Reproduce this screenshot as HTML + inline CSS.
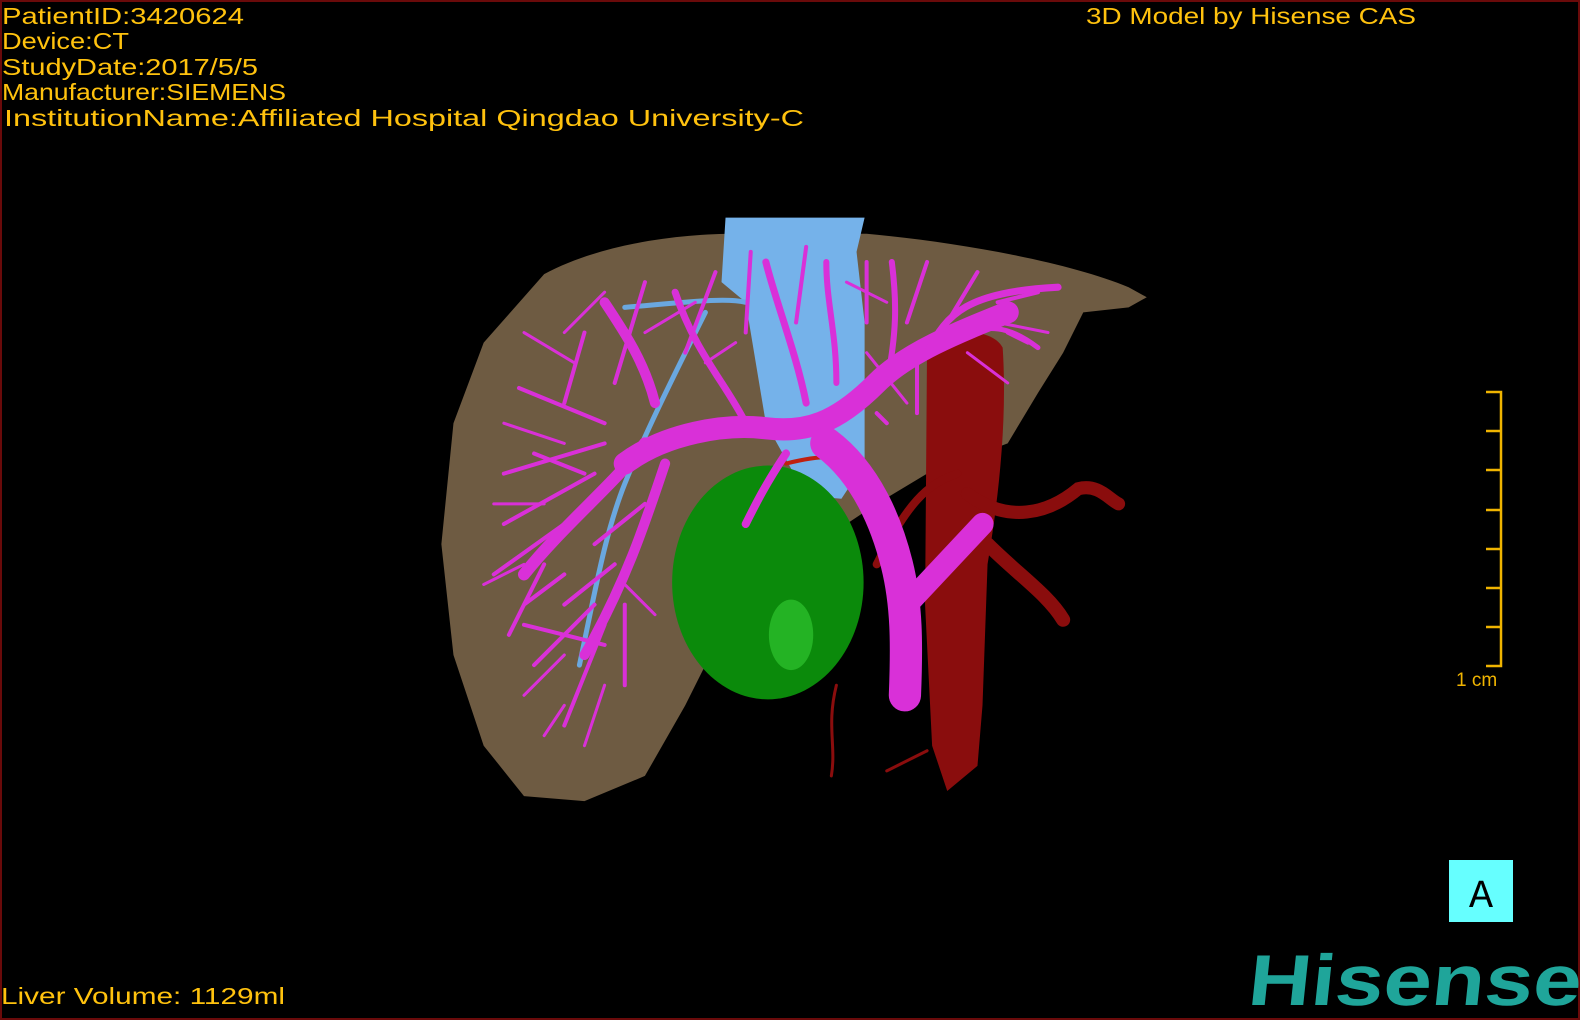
<!DOCTYPE html>
<html><head><meta charset="utf-8"><style>
html,body{margin:0;padding:0;background:#000;}
svg{display:block;}
.t{font-family:"Liberation Sans Narrow","Liberation Sans",sans-serif;fill:#ffc20e;font-size:23px;}
</style></head><body>
<svg width="1580" height="1020" viewBox="0 0 1580 1020" xmlns="http://www.w3.org/2000/svg">
<rect x="0" y="0" width="1580" height="1020" fill="#000"/>
<rect x="1" y="1" width="1578" height="1018" fill="none" stroke="#6a0a0a" stroke-width="2"/>
<text class="t" x="2" y="24" textLength="242" lengthAdjust="spacingAndGlyphs">PatientID:3420624</text>
<text class="t" x="2" y="49" textLength="127" lengthAdjust="spacingAndGlyphs">Device:CT</text>
<text class="t" x="2" y="75" textLength="256" lengthAdjust="spacingAndGlyphs">StudyDate:2017/5/5</text>
<text class="t" x="2" y="100" textLength="284" lengthAdjust="spacingAndGlyphs">Manufacturer:SIEMENS</text>
<text class="t" x="4" y="126" textLength="800" lengthAdjust="spacingAndGlyphs">InstitutionName:Affiliated Hospital Qingdao University-C</text>
<text class="t" x="1086" y="24" textLength="330" lengthAdjust="spacingAndGlyphs">3D Model by Hisense CAS</text>
<text class="t" x="1" y="1004" textLength="284" lengthAdjust="spacingAndGlyphs">Liver Volume: 1129ml</text>
<g fill="none" stroke="#f0b400" stroke-width="2.5">
<path d="M1486 392H1501V666H1486"/>
<path d="M1486 431H1501M1486 470H1501M1486 510H1501M1486 549H1501M1486 588H1501M1486 627H1501"/>
</g>
<text x="1456" y="686" font-family="Liberation Sans,sans-serif" font-size="19" fill="#f0b400">1 cm</text>
<rect x="1449" y="860" width="64" height="62" fill="#66ffff"/>
<text x="1481" y="907" text-anchor="middle" font-family="Liberation Mono,monospace" font-size="40" fill="#000">A</text>
<text x="1247" y="1005" font-family="Liberation Sans,sans-serif" font-weight="bold" font-size="72" fill="#1fa59a" textLength="333" lengthAdjust="spacingAndGlyphs" transform="skewX(-6) translate(105,0)">Hisense</text>
<g transform="scale(1.0077)">
<path d="M540 272 C600 240 680 232 730 232 L860 232 C950 240 1060 260 1120 285 L1138 295 L1120 305 L1075 310 L1055 350 L1030 390 L1000 440 L920 470 L870 500 L780 560 L720 620 L680 700 L640 770 L580 795 L520 790 L480 740 L450 650 L438 540 L450 420 L480 340 Z" fill="#6e5b42"/>
<path d="M720 216 L858 216 L850 250 L858 320 L858 460 L835 495 L800 492 L760 420 L740 300 L716 280 Z" fill="#75b2ea"/>
<path d="M920 340 C940 325 985 325 995 345 C1000 420 990 500 980 560 L975 700 L970 760 L940 785 L925 740 L918 600 Z" fill="#8a0d0d"/>
<g fill="none" stroke="#8a0d0d" stroke-linecap="round">
<path d="M960 490 C1000 520 1040 510 1070 485 C1090 480 1100 495 1110 500" stroke-width="13"/>
<path d="M980 540 C1010 570 1040 590 1055 615" stroke-width="14"/>
<path d="M870 560 C900 500 920 480 950 470" stroke-width="8"/>
<path d="M830 680 C820 720 830 740 825 770" stroke-width="3"/>
<path d="M780 460 C820 450 850 450 860 470" stroke-width="4" stroke="#c02010"/>
<path d="M920 745 L880 765" stroke-width="3"/>
</g>
<ellipse cx="762" cy="578" rx="95" ry="116" fill="#0b8a0b"/>
<ellipse cx="785" cy="630" rx="22" ry="35" fill="#24b324"/>
<g fill="none" stroke="#6aa8e0" stroke-linecap="round" stroke-width="5">
<path d="M620 305 C680 300 720 295 740 300"/>
<path d="M700 310 C670 370 640 430 620 480 C600 530 590 590 575 660"/>
</g>
<g fill="none" stroke="#d930d8" stroke-linecap="round" stroke-linejoin="round">
<path d="M620 460 C660 430 720 420 760 425 C800 430 830 420 870 380 C900 350 950 330 1000 310" stroke-width="22"/>
<path d="M820 440 C860 470 880 520 890 560 C900 600 900 640 898 690" stroke-width="32"/>
<path d="M900 600 L975 520" stroke-width="22"/>
<path d="M640 440 C610 480 560 520 520 570" stroke-width="12"/>
<path d="M650 400 C640 360 620 330 600 300" stroke-width="10"/>
<path d="M660 460 C640 520 620 580 580 650" stroke-width="10"/>
<path d="M740 420 C720 380 690 350 670 290" stroke-width="7"/>
<path d="M800 400 C790 350 770 300 760 260" stroke-width="7"/>
<path d="M830 380 C830 330 820 300 820 260" stroke-width="6"/>
<path d="M880 380 C890 330 890 300 885 260" stroke-width="6"/>
<path d="M920 350 C940 310 960 290 1050 285" stroke-width="7"/>
<path d="M960 330 C990 320 1010 330 1030 345" stroke-width="5"/>
<path d="M780 450 C760 480 750 500 740 520" stroke-width="8"/>
<g stroke-width="4">
<path d="M600 420 L515 385 M600 440 L500 470 M590 470 L500 520 M560 520 L490 570 M540 560 L505 630 M590 600 L530 660 M600 620 L560 720 M620 600 L620 680 M560 400 L580 330 M610 380 L640 280 M680 350 L710 270 M740 330 L745 250 M790 320 L800 245 M860 320 L860 260 M900 320 L920 260 M940 320 L970 270 M990 300 L1030 290 M1000 330 L1020 340 M530 450 L580 470 M520 600 L560 570 M610 560 L560 600 M640 500 L590 540 M910 360 L910 410 M870 410 L880 420 M520 620 L600 640"/>
</g>
<g stroke-width="3">
<path d="M570 360 L520 330 M560 440 L500 420 M540 500 L490 500 M520 560 L480 580 M560 650 L520 690 M600 680 L580 740 M560 700 L540 730 M640 330 L690 300 M700 360 L730 340 M860 350 L900 400 M990 320 L1040 330 M960 350 L1000 380 M880 300 L840 280 M560 330 L600 290 M620 580 L650 610"/>
</g>
</g>
</g>
</svg>
</body></html>
